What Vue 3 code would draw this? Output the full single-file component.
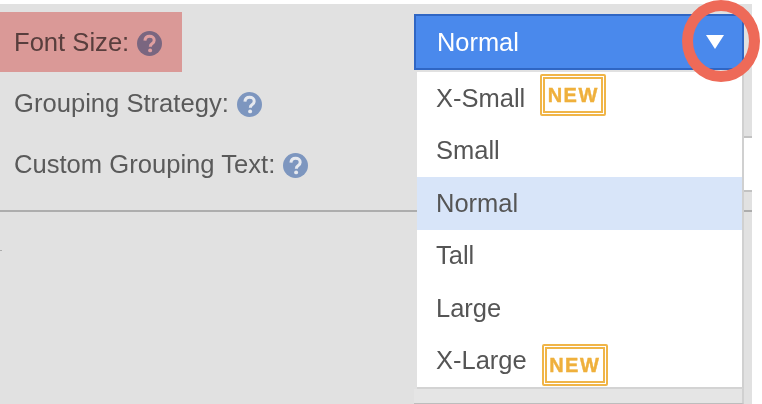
<script setup>
const options = [
  { label: 'X-Small', badge: 'up' },
  { label: 'Small' },
  { label: 'Normal', active: true },
  { label: 'Tall' },
  { label: 'Large' },
  { label: 'X-Large', badge: 'down' },
]
const labels = ['Font Size:', 'Grouping Strategy:', 'Custom Grouping Text:']
</script>

<template>
  <div class="page">
    <div class="panel">
      <div class="form">
        <div class="labels">
          <div v-for="label in labels" :key="label" class="row">
            <span>{{ label }}</span>
            <svg class="help" viewBox="0 0 24 24" width="25" height="25">
              <circle cx="12" cy="12" r="12" fill="#7d96bf" />
              <path d="M7.6 9.3c.2-2.6 2-4.2 4.5-4.2 2.6 0 4.4 1.5 4.4 3.7 0 1.7-.9 2.6-2.1 3.4-1.2.8-1.6 1.3-1.6 2.8" fill="none" stroke="#e6e9ef" stroke-width="2.9" />
              <circle cx="12.6" cy="18.6" r="1.9" fill="#e6e9ef" />
            </svg>
          </div>
        </div>
        <div class="select">
          <div class="head">
            <span>Normal</span>
            <span class="caret"></span>
          </div>
          <ul class="menu">
            <li v-for="o in options" :key="o.label" :class="{ active: o.active }">
              <span>{{ o.label }}</span>
              <span v-if="o.badge" class="badge" :class="o.badge"><span class="badge-in">NEW</span></span>
            </li>
          </ul>
        </div>
      </div>
      <div class="mark"></div>
      <div class="highlight"></div>
      <div class="ring"></div>
      <div class="field"></div>
    </div>
  </div>
</template>

<style>
html, body { margin: 0; background: #fff; }
</style>

<style scoped>
.page {
  width: 762px;
  height: 404px;
  padding-top: 4px;
  box-sizing: border-box;
  overflow: hidden;
  font-family: "Liberation Sans", Arial, sans-serif;
  position: relative;
}
.panel {
  width: 752px;
  height: 400px;
  background: #e1e1e1;
  position: relative;
}
.form {
  height: 206px;
  border-bottom: 2px solid #adadad;
  padding-left: 14px;
}
.labels { padding-top: 8px; }
.row {
  height: 61px;
  display: flex;
  align-items: center;
  gap: 8px;
  font-size: 25.6px;
  color: #5a5a5a;
}
.help { flex: none; margin-top: 2px; }
.select {
  width: 330px;
  position: absolute;
  left: 414px;
  top: 10px;
}
.head {
  height: 56px;
  box-sizing: border-box;
  background: #4a89ec;
  border: 2px solid #2f66c4;
  color: #fff;
  font-size: 25.4px;
  padding: 0 18px 0 21px;
  display: flex;
  align-items: center;
  justify-content: space-between;
}
.caret {
  width: 0;
  height: 0;
  border-left: 9px solid transparent;
  border-right: 9px solid transparent;
  border-top: 14px solid #fff;
}
.menu {
  list-style: none;
  margin: 2px 0 0 3px;
  padding: 0;
  width: 327px;
  box-sizing: border-box;
  height: 317px;
  background: #fff;
  border-bottom: 2px solid #d3d3d3;
  border-right: 2px solid #d0d0d0;
  font-size: 25.5px;
  color: #555;
}
.menu li {
  height: 52.5px;
  padding-left: 19px;
  display: flex;
  align-items: center;
  gap: 15px;
}
.menu li.active { background: #d8e5f9; }
.badge {
  border: 2px solid #f0b548;
  border-radius: 2px;
  padding: 1px;
  display: inline-flex;
}
.badge.up { margin-top: -6px; }
.badge.down { margin-top: 8px; }
.badge-in {
  border: 2px solid #f0b548;
  color: #efb03c;
  font-size: 20px;
  font-weight: 700;
  -webkit-text-stroke: 0.4px #efb03c;
  letter-spacing: 1.5px;
  line-height: 32px;
  width: 56px;
  text-align: center;
}
.mark {
  position: absolute;
  left: 0;
  top: 246px;
  width: 2px;
  height: 1px;
  background: #adadad;
}
.highlight {
  position: absolute;
  left: 0;
  top: 8px;
  width: 182px;
  height: 60px;
  background: rgb(248, 174, 171);
  mix-blend-mode: multiply;
}
.ring {
  position: absolute;
  left: 682px;
  top: -4px;
  width: 78px;
  height: 82px;
  box-sizing: border-box;
  border: 11px solid #ee6a58;
  border-radius: 50%;
}
.field {
  position: absolute;
  left: 744px;
  top: 132px;
  width: 8px;
  height: 56px;
  background: #fff;
  border-top: 2px solid #c2c2c2;
  border-bottom: 2px solid #c2c2c2;
  box-sizing: border-box;
}
.select::after {
  content: "";
  display: block;
  height: 15px;
  background: #e5e5e5;
  border-right: 2px solid #d0d0d0;
  border-bottom: 1px solid #bdbdbd;
  box-sizing: border-box;
}
</style>
